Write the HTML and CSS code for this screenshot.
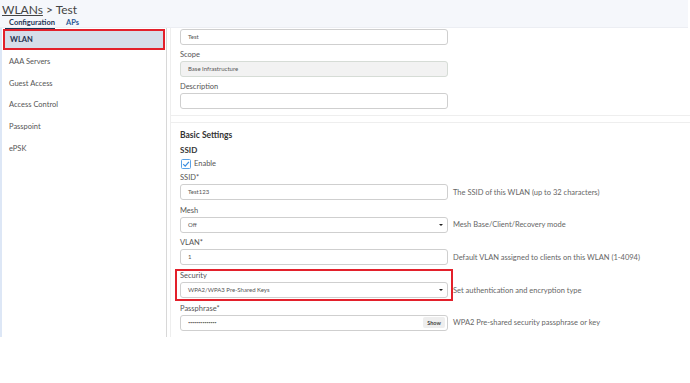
FILE: index.html
```html
<!DOCTYPE html>
<html lang="en">
<head>
    <meta charset="UTF-8">
    <meta name="viewport" content="width=device-width, initial-scale=1.0">
    <title>WLAN - Test</title>
    <link rel="stylesheet" href="styles.css">
</head>
<body>
    <!-- Header with breadcrumb and tabs -->
    <header class="topbar">
        <div class="breadcrumb"><a href="#">WLANs</a> &gt; Test</div>
        <nav class="tabs">
            <a href="#" class="tab active">Configuration</a>
            <a href="#" class="tab">APs</a>
        </nav>
    </header>

    <div class="page">
        <!-- Side menu -->
        <aside class="sidebar">
            <ul class="menu">
                <li class="menu-item selected">WLAN</li>
                <li class="menu-item">AAA Servers</li>
                <li class="menu-item">Guest Access</li>
                <li class="menu-item">Access Control</li>
                <li class="menu-item">Passpoint</li>
                <li class="menu-item">ePSK</li>
            </ul>
        </aside>

        <!-- Form -->
        <main class="content">
            <section class="card card-general">
                <div class="input">Test</div>
                <div class="field">
                    <label>Scope</label>
                    <div class="input disabled">Base Infrastructure</div>
                </div>
                <div class="field">
                    <label>Description</label>
                    <div class="input"></div>
                </div>
            </section>

            <section class="card card-basic">
                <h3>Basic Settings</h3>
                <h4>SSID</h4>
                <div class="checkbox-row">
                    <svg class="checkbox" width="10" height="10" viewBox="0 0 10 10">
                        <rect x="0.5" y="0.5" width="9" height="9" rx="1" fill="#fff" stroke="#5aa2e6"/>
                        <path d="M2.2 5.2 L4.2 7.2 L7.9 2.8" fill="none" stroke="#3b8ee0" stroke-width="1.2"/>
                    </svg>
                    <span>Enable</span>
                </div>

                <div class="row">
                    <label>SSID*</label>
                    <div class="input">Test123</div>
                    <span class="help">The SSID of this WLAN (up to 32 characters)</span>
                </div>
                <div class="row">
                    <label>Mesh</label>
                    <div class="input select">Off</div>
                    <span class="help">Mesh Base/Client/Recovery mode</span>
                </div>
                <div class="row">
                    <label>VLAN*</label>
                    <div class="input">1</div>
                    <span class="help">Default VLAN assigned to clients on this WLAN (1-4094)</span>
                </div>
                <div class="row highlight">
                    <label>Security</label>
                    <div class="input select">WPA2/WPA3 Pre-Shared Keys</div>
                    <span class="help">Set authentication and encryption type</span>
                </div>
                <div class="row">
                    <label>Passphrase*</label>
                    <div class="input password">
                        <span class="dots">••••••••••••••</span>
                        <button class="show-btn">Show</button>
                    </div>
                    <span class="help">WPA2 Pre-shared security passphrase or key</span>
                </div>
            </section>
        </main>
    </div>
</body>
</html>
```

FILE: styles.css
```css
/* Basic Reset */
* {
    margin: 0;
    padding: 0;
    box-sizing: border-box;
}

body {
    font-family: Lato, "Open Sans", sans-serif;
    background-color: #fff;
    color: #555;
    width: 690px;
    height: 383px;
    overflow: hidden;
}

/* Header */
.topbar {
    width: 688px;
    height: 28px;
    background-color: #f5f7fb;
    border-bottom: 1px solid #eceef3;
}

.breadcrumb {
    font-size: 12px;
    line-height: 14px;
    padding: 3px 0 0 2px;
    color: #444;
}

.breadcrumb a {
    color: #444;
    text-decoration: underline;
}

.tabs {
    display: flex;
    gap: 7px;
    padding: 1px 0 0 5px;
}

.tab {
    font-size: 7.5px;
    font-weight: bold;
    line-height: 9px;
    padding: 0 0 1px 4px;
    color: #2d5a97;
    text-decoration: none;
}

.tab.active {
    color: #1e3556;
    border-bottom: 2px solid #1e3556;
}

/* Layout */
.page {
    display: flex;
    height: 309px;
}

.sidebar {
    width: 167px;
    border-left: 2px solid #dde7f6;
    border-right: 1px solid #d8d8d8;
    padding-top: 1px;
}

.menu {
    list-style-type: none;
}

.menu-item {
    height: 21.8px;
    line-height: 21.8px;
    padding-left: 7px;
    font-size: 7.5px;
    color: #555;
}

.menu-item.selected {
    height: 21px;
    line-height: 17px;
    margin: 0 1px 0.8px 1px;
    background-color: #d6dde9;
    border: 2px solid #e3202b;
    font-weight: bold;
    color: #1d2f4d;
    padding-left: 5px;
}

.content {
    flex: 1;
    margin-left: 3px;
    border-left: 1px solid #eee;
    width: 518px;
}

.card {
    padding-left: 9px;
}

.card-general {
    padding-top: 1px;
    height: 88px;
    border-bottom: 1px solid #eee;
}

.card-basic {
    margin-top: 6px;
    border-top: 1px solid #eee;
    padding-top: 5px;
}

h3 {
    font-size: 8.5px;
    line-height: 12px;
    margin-top: 1px;
    color: #333;
}

h4 {
    font-size: 8px;
    line-height: 12px;
    margin-top: 3px;
    color: #333;
}

label {
    display: block;
    font-size: 7.5px;
    line-height: 12px;
    color: #555;
}

.field {
    margin-top: 4px;
}

.input {
    position: relative;
    width: 268px;
    height: 16px;
    line-height: 14px;
    border: 1px solid #cfcfcf;
    border-radius: 3px;
    background-color: #fff;
    padding-left: 7px;
    font-size: 6px;
    color: #555;
}

.input.disabled {
    background-color: #f2f2f2;
    border-color: #d6dcd6;
}

.input.select::after {
    content: "";
    position: absolute;
    right: 4px;
    top: 6px;
    border-left: 2px solid transparent;
    border-right: 2px solid transparent;
    border-top: 2.5px solid #222;
}

.checkbox-row {
    display: flex;
    align-items: center;
    gap: 3px;
    height: 13px;
    margin: 1px 0 2px 0;
    padding-left: 1px;
    font-size: 7.5px;
    color: #555;
}

/* Form rows: label over control, help text to the right */
.row {
    position: relative;
    display: grid;
    grid-template-columns: 268px auto;
    column-gap: 5px;
    margin-bottom: 4.7px;
}

.row label {
    grid-column: 1;
}

.row .input {
    grid-column: 1;
    grid-row: 2;
}

.row .help {
    grid-column: 2;
    grid-row: 2;
    align-self: center;
    font-size: 7.5px;
    color: #666;
    white-space: nowrap;
}

.row.highlight::after {
    content: "";
    position: absolute;
    left: -5px;
    top: -1px;
    width: 274px;
    height: 28px;
    border: 2px solid #e3202b;
}

.input.password {
    display: flex;
    align-items: center;
    justify-content: space-between;
    padding-right: 2px;
}

.dots {
    font-size: 4px;
    letter-spacing: -0.3px;
    color: #666;
}

.show-btn {
    font-family: Lato, sans-serif;
    font-size: 5.5px;
    font-weight: bold;
    color: #444;
    background-color: #eee;
    border: none;
    border-radius: 2px;
    width: 22px;
    height: 11px;
}
```
